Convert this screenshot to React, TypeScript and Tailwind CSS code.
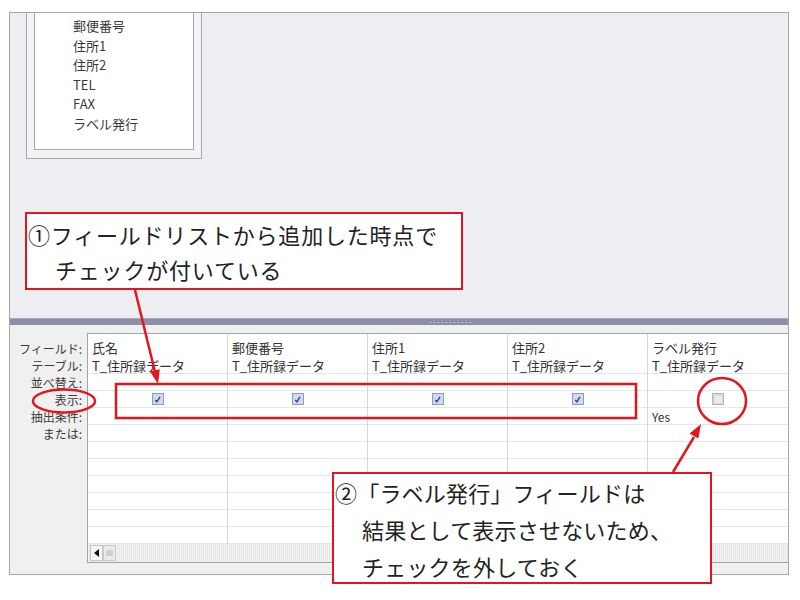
import React from 'react';

const FONT = { fontFamily: '"Noto Sans CJK JP", "Noto Sans", sans-serif' };

const FIELD_LIST = ['郵便番号', '住所1', '住所2', 'TEL', 'FAX', 'ラベル発行'];
const ROW_LABELS = ['テーブル:', '並べ替え:', '表示:', '抽出条件:', 'または:'];

type Column = { field: string; show: boolean; criteria?: string };

const COLUMNS: Column[] = [
  { field: '氏名', show: true },
  { field: '郵便番号', show: true },
  { field: '住所1', show: true },
  { field: '住所2', show: true },
  { field: 'ラベル発行', show: false, criteria: 'Yes' },
];

// 抽出条件・または 以降の空行
const EMPTY_ROWS = [0, 1, 2, 3, 4, 5];

const CheckBox: React.FC<{ checked: boolean }> = ({ checked }) =>
  checked ? (
    <span className="w-[12px] h-[12px] border border-[#8f9cb8] bg-[#d3dbeb] flex items-center justify-center">
      <svg viewBox="0 0 10 10" className="w-[9px] h-[9px]">
        <path d="M2.5 5.5 L4.3 7.6 L7.8 2.2" stroke="#2c3f9c" strokeWidth="1.5" fill="none" />
      </svg>
    </span>
  ) : (
    <span className="w-[12px] h-[12px] border border-[#b5b5b5] bg-[#d9d9d9] flex items-center justify-center">
      <span className="w-[7px] h-[7px] bg-[#ececec]" />
    </span>
  );

const GridColumn: React.FC<{ col: Column; last: boolean }> = ({ col, last }) => (
  <div className={`w-[140px] flex flex-col ${last ? '' : 'border-r border-[#d3d8e0]'}`}>
    <div className="h-[23px] flex items-end pl-[4px] pb-[1px] text-[13px] leading-[16px] text-[#333]">{col.field}</div>
    <div className="h-[17px] border-b border-[#e3e6ec] pl-[4px] pt-[1px] text-[13px] leading-[16px] text-[#333] whitespace-nowrap overflow-visible">
      T_住所録データ
    </div>
    <div className="h-[17px] border-b border-[#e3e6ec]" />
    <div className="h-[17px] border-b border-[#e3e6ec] flex items-center justify-center">
      <CheckBox checked={col.show} />
    </div>
    <div className="h-[17px] border-b border-[#e3e6ec] pl-[4px] text-[12px] leading-[18px] text-[#333]">
      {col.criteria}
    </div>
    <div className="h-[17px] border-b border-[#e3e6ec]" />
    {EMPTY_ROWS.map((r) => (
      <div key={r} className="h-[17px] border-b border-[#e3e6ec]" />
    ))}
  </div>
);

export default function App() {
  return (
    <div className="relative w-[800px] h-[600px] bg-white overflow-hidden" style={FONT}>
      {/* ウィンドウ枠 */}
      <div className="ml-[9px] mt-[12px] w-[780px] h-[563px] border border-[#a8a8a8] flex flex-col">
        {/* 上ペイン: フィールドリスト */}
        <div className="h-[305px] bg-[#eceef2] overflow-hidden">
          <div className="ml-[16px] w-[176px] h-[146px] border-x border-b border-[#a9a9a9] bg-[#f3f3f4]">
            <div className="ml-[7px] w-[160px] h-[137px] border-x border-b border-[#a9a9a9] bg-white pt-[3px] pl-[38px]">
              {FIELD_LIST.map((f) => (
                <div key={f} className="text-[13px] leading-[19.6px] text-[#3a3a3a]">
                  {f}
                </div>
              ))}
            </div>
          </div>
        </div>

        {/* スプリッタ */}
        <div className="h-[7px] bg-[#8d8fa7] border-t border-[#a6a8bc] flex items-center pl-[420px]">
          <div className="w-[43px] h-[1px] bg-[repeating-linear-gradient(90deg,#dcdcea_0_1px,transparent_1px_4px)]" />
        </div>

        {/* 下ペイン: デザイングリッド */}
        <div className="flex-1 bg-[#f0f0f0] flex">
          <div className="w-[77px] pt-[9px] pr-[5px] flex flex-col items-end text-[12px] text-[#3c3c3c]">
            <div className="h-[23px] flex items-end leading-[17px]">フィールド:</div>
            {ROW_LABELS.map((l) => (
              <div key={l} className="h-[17px] leading-[17px]">
                {l}
              </div>
            ))}
          </div>

          <div className="mt-[8px] mb-[11px] flex-1 border-l border-t border-b border-[#a4a4a4] bg-white flex flex-col">
            <div className="flex">
              {COLUMNS.map((c, i) => (
                <GridColumn key={c.field} col={c} last={i === COLUMNS.length - 1} />
              ))}
            </div>
            {/* 横スクロールバー */}
            <div className="h-[18px] flex items-center pl-[2px] bg-[repeating-linear-gradient(90deg,#f4f4f4_0_1px,#e6e6e6_1px_2px)]">
              <div className="w-[13px] h-[16px] bg-[#f4f4f4] border border-[#c8c8c8] flex items-center justify-center">
                <span className="w-0 h-0 border-y-[4px] border-y-transparent border-r-[5px] border-r-[#111]" />
              </div>
              <div className="w-[13px] h-[16px] bg-[#eaeaea] border border-[#c8c8c8] flex items-center justify-center">
                <span className="w-[7px] h-[6px] bg-[#cfcfcf]" />
              </div>
            </div>
          </div>
        </div>
      </div>

      {/* 注釈: 吹き出し1 */}
      <div className="absolute left-[25px] top-[212px] w-[438px] h-[78px] border-2 border-[#e3161e] bg-white pt-[3px] pl-[1px] text-[22px] leading-[35px] tracking-[0.8px] text-[#222]">
        <div>①フィールドリストから追加した時点で</div>
        <div className="pl-[27px]">チェックが付いている</div>
      </div>

      {/* 注釈: 吹き出し2 */}
      <div className="absolute left-[332px] top-[472px] w-[380px] h-[112px] border-2 border-[#e3161e] bg-white pl-[1px] text-[22px] leading-[37px] tracking-[0.2px] text-[#222]">
        <div>②「ラベル発行」フィールドは</div>
        <div className="pl-[27px]">結果として表示させないため、</div>
        <div className="pl-[27px]">チェックを外しておく</div>
      </div>

      {/* 注釈: 矢印・囲み */}
      <svg className="absolute inset-0 pointer-events-none" width="800" height="600" viewBox="0 0 800 600">
        <g stroke="#e3161e" strokeWidth="2.5" fill="none">
          <line x1="135" y1="290" x2="155" y2="372" />
          <rect x="116" y="384" width="520" height="34" />
          <ellipse cx="64" cy="401" rx="31" ry="11.5" />
          <ellipse cx="722" cy="401" rx="24" ry="23" />
          <line x1="673" y1="472" x2="694" y2="437" />
        </g>
        <polygon points="158,384 159.8,369.2 150,371.4" fill="#e3161e" />
        <polygon points="701,424 698.3,438.6 689.6,433.6" fill="#e3161e" />
      </svg>
    </div>
  );
}
